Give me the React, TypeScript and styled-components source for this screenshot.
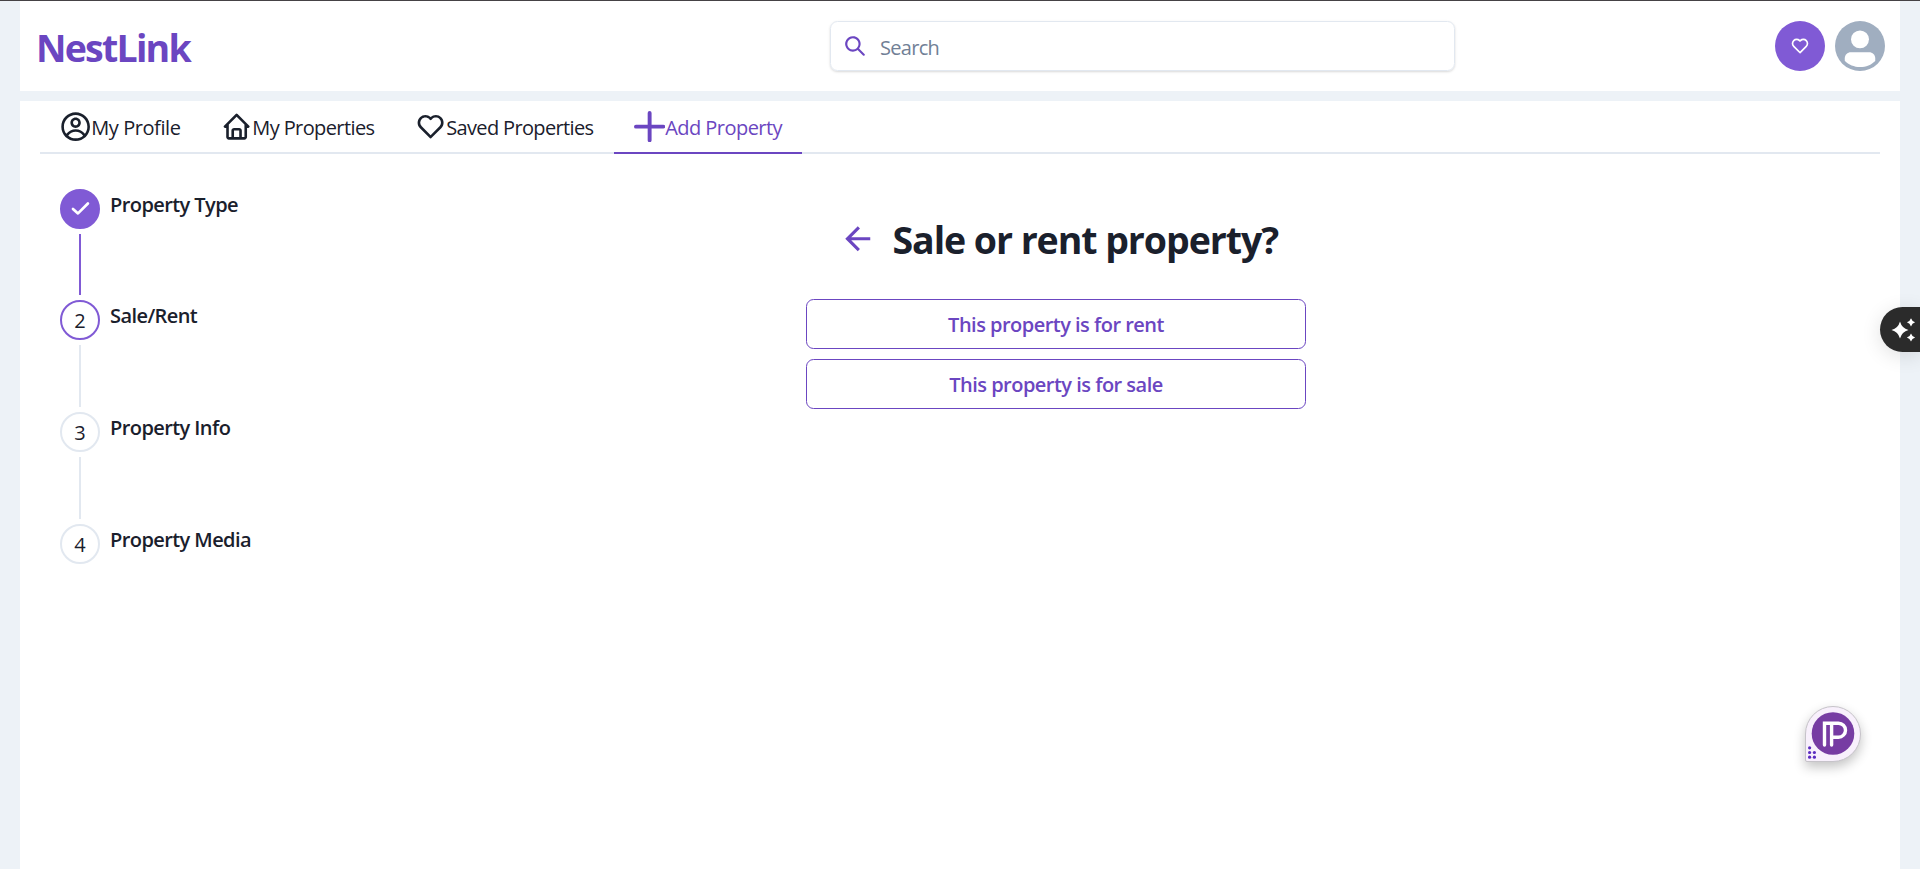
import React from "react";
import styled, { createGlobalStyle, css } from "styled-components";
import { BiHome, BiHeart } from "react-icons/bi";
import { CgProfile } from "react-icons/cg";
import { MdArrowBack } from "react-icons/md";

const color = {
  brand: "#6b46c1",
  brandLight: "#805ad5",
  ink: "#1a202c",
  line: "#e2e8f0",
  page: "#edf2f7",
  muted: "#718096",
};

const Global = createGlobalStyle`
  * { box-sizing: border-box; }
  html, body { margin: 0; overflow: hidden; }
  body {
    font-family: "Segoe UI", "Open Sans", "Noto Sans", sans-serif;
    font-size: 20px;
    line-height: 30px;
    color: ${color.ink};
    background: ${color.page};
  }
  svg { display: block; flex-shrink: 0; }
`;

const Text = styled.span<{ $track?: number }>`
  white-space: nowrap;
  letter-spacing: ${(p) => p.$track ?? 0}px;
`;

const Page = styled.div`
  height: 869px;
  padding: 0 20px;
  border-top: 1px solid #454245;
  display: flex;
  flex-direction: column;
  gap: 10px;
`;

const Header = styled.header`
  height: 90px;
  background: #fff;
  padding: 0 15px 0 16px;
  display: flex;
  align-items: center;
`;

const Brand = styled.h1`
  margin: 3px 0 0;
  width: 160px;
  font-size: 37.5px;
  line-height: 45px;
  font-weight: 700;
  color: ${color.brand};
`;

const SearchBox = styled.label`
  width: 625px;
  height: 50px;
  margin-left: 634px;
  display: flex;
  align-items: center;
  gap: 15px;
  padding-left: 14px;
  border: 1px solid ${color.line};
  border-radius: 7.5px;
  box-shadow: 0 1px 3px rgba(0, 0, 0, 0.1), 0 1px 2px rgba(0, 0, 0, 0.06);
  color: ${color.brand};
`;

const Placeholder = styled(Text)`
  color: ${color.muted};
  margin-top: 4px;
`;

const Actions = styled.div`
  display: flex;
  gap: 10px;
  margin-left: auto;
`;

const Round = styled.div<{ $bg: string }>`
  width: 50px;
  height: 50px;
  border-radius: 50%;
  background: ${(p) => p.$bg};
  color: #fff;
  display: flex;
  align-items: center;
  justify-content: center;
`;

const Panel = styled.main`
  flex: 1;
  background: #fff;
  padding: 0 20px;
`;

const Tabs = styled.nav`
  height: 53px;
  display: flex;
  border-bottom: 2px solid ${color.line};
`;

const Tab = styled.div<{ $width: number; $active?: boolean }>`
  width: ${(p) => p.$width}px;
  height: 53px;
  padding-left: 20px;
  display: flex;
  align-items: center;
  border-bottom: 2px solid transparent;
  ${(p) =>
    p.$active &&
    css`
      color: ${color.brand};
      border-bottom-color: ${color.brand};
    `}
  span { margin-top: 3px; }
`;

const Content = styled.div`
  display: flex;
  padding: 34.6px 20px 0;
`;

const Steps = styled.ol`
  list-style: none;
  margin: 0;
  padding: 0;
  width: 746px;
`;

const Step = styled.li`
  display: flex;
  gap: 10px;
  height: 111.67px;
`;

const Rail = styled.div`
  display: flex;
  flex-direction: column;
  align-items: center;
  gap: 5px;
`;

const Marker = styled.div<{ $state: "done" | "active" | "todo" }>`
  width: 40px;
  height: 40px;
  border-radius: 50%;
  display: flex;
  align-items: center;
  justify-content: center;
  padding-top: ${(p) => (p.$state === "done" ? 0 : 2)}px;
  border: 2px solid ${(p) => (p.$state === "todo" ? color.line : color.brandLight)};
  background: ${(p) => (p.$state === "done" ? color.brandLight : "#fff")};
`;

const Connector = styled.div<{ $done: boolean }>`
  width: 2px;
  height: 61.6px;
  background: ${(p) => (p.$done ? color.brandLight : color.line)};
`;

const StepTitle = styled.h3`
  margin: 1px 0 0;
  font-size: 20px;
  line-height: 30px;
  font-weight: 600;
`;

const Question = styled.section`
  width: 500px;
  padding-top: 27.4px;
`;

const QuestionHead = styled.div`
  display: flex;
  align-items: center;
  height: 45px;
  padding-left: 33px;
  gap: 16px;
  color: ${color.brand};
`;

const Title = styled.h2`
  margin: 3px 0 0;
  font-size: 37.5px;
  line-height: 45px;
  font-weight: 700;
  color: ${color.ink};
`;

const Choices = styled.div`
  margin-top: 38px;
  display: flex;
  flex-direction: column;
  gap: 10px;
`;

const Choice = styled.button`
  height: 50px;
  padding: 2px 0 0;
  border: 1px solid ${color.brand};
  border-radius: 7.5px;
  background: #fff;
  color: ${color.brand};
  font: 600 20px/24px "Segoe UI", "Open Sans", "Noto Sans", sans-serif;
`;

const AssistTab = styled.div`
  position: absolute;
  right: 0;
  top: 307px;
  width: 40px;
  height: 45px;
  padding-left: 11px;
  display: flex;
  align-items: center;
  border-radius: 23px 0 0 23px;
  background: #2b2b2b;
  box-shadow: 0 4px 20px rgba(0, 0, 0, 0.12);
`;

const ChatBadge = styled.div`
  position: absolute;
  left: 1805px;
  top: 706px;
  width: 56px;
  height: 56px;
  border: 1px solid #c6c3c9;
  border-radius: 28px 28px 28px 2px;
  background: #f8f0fc;
  box-shadow: 0 5px 12px rgba(0, 0, 0, 0.24);
`;

const SearchIcon = () => (
  <svg width="20" height="20" viewBox="0 0 24 24" fill="currentColor">
    <path d="M23.384,21.619,16.855,15.09a9.284,9.284,0,1,0-1.768,1.768l6.529,6.529a1.266,1.266,0,0,0,1.768,0A1.251,1.251,0,0,0,23.384,21.619ZM2.75,9.5a6.75,6.75,0,1,1,6.75,6.75A6.758,6.758,0,0,1,2.75,9.5Z" />
  </svg>
);

const PlusIcon = () => (
  <svg width="31.25" height="31.25" viewBox="0 0 16 16" fill="currentColor">
    <path d="M8 0a1 1 0 0 1 1 1v6h6a1 1 0 1 1 0 2H9v6a1 1 0 1 1-2 0V9H1a1 1 0 0 1 0-2h6V1a1 1 0 0 1 1-1z" />
  </svg>
);

const CheckIcon = () => (
  <svg width="20" height="20" viewBox="0 0 20 20" fill="none" stroke="#fff" strokeWidth="2.7" strokeLinecap="round" strokeLinejoin="round">
    <path d="M3 9.900l5 4.500L17.900 4.500" />
  </svg>
);

const AvatarIcon = () => (
  <svg width="50" height="50" viewBox="0 0 128 128" fill="#fff">
    <path d="M103,102.1388 C93.094,111.92 79.3504,118 64.1638,118 C48.8056,118 34.9294,111.768 25,101.7892 L25,95.2 C25,86.8096 31.981,80 40.6,80 L87.4,80 C96.019,80 103,86.8096 103,95.2 L103,102.1388 Z" />
    <circle cx="64" cy="47" r="23" />
  </svg>
);

const SparkleIcon = () => (
  <svg width="25" height="24" viewBox="0 0 25 24" fill="#fff">
    <path d="M9 3.500Q10.800 10.200 17.500 12Q10.800 13.800 9 20.500Q7.200 13.800.5 12Q7.200 10.200 9 3.500z" />
    <path d="M20 .2Q21 3.300 24.100 4.300Q21 5.300 20 8.400Q19 5.300 15.900 4.300Q19 3.300 20 .2z" />
    <path d="M20 15.400Q21 18.500 24.100 19.500Q21 20.500 20 23.600Q19 20.500 15.900 19.500Q19 18.500 20 15.400z" />
  </svg>
);

const ChatLogo = () => (
  <svg width="54" height="54" viewBox="0 0 54 54">
    <circle cx="27" cy="26.500" r="21.300" fill="#773ca3" />
    <path d="M18.500 38V16.200H32.500a6.900 6.900 0 0 1 0 14H25.600M25.600 38V17" fill="none" stroke="#fff" strokeWidth="3.400" strokeLinecap="round" />
    <g fill="#5a2bc0">
      <circle cx="3.600" cy="40.800" r="1.600" />
      <circle cx="3.600" cy="45.500" r="1.600" />
      <circle cx="8.400" cy="45.500" r="1.600" />
      <circle cx="3.600" cy="50.200" r="1.600" />
      <circle cx="8.400" cy="50.200" r="1.600" />
    </g>
  </svg>
);

const tabs = [
  { label: "My Profile", icon: <CgProfile size={31.25} />, width: 161, track: -0.43 },
  { label: "My Properties", icon: <BiHome size={31.25} />, width: 194, track: -0.6 },
  { label: "Saved Properties", icon: <BiHeart size={31.25} />, width: 219, track: -0.65 },
  { label: "Add Property", icon: <PlusIcon />, width: 188, track: -0.55, active: true },
];

const steps = [
  { title: "Property Type", state: "done" },
  { title: "Sale/Rent", state: "active" },
  { title: "Property Info", state: "todo" },
  { title: "Property Media", state: "todo" },
] as const;

export default function App() {
  return (
    <>
      <Global />
      <Page>
        <Header>
          <Brand><Text $track={-1.77}>NestLink</Text></Brand>
          <SearchBox>
            <SearchIcon />
            <Placeholder $track={-0.7}>Search</Placeholder>
          </SearchBox>
          <Actions>
            <Round $bg={color.brandLight}><BiHeart size={20} /></Round>
            <Round $bg="#a0aec0"><AvatarIcon /></Round>
          </Actions>
        </Header>
        <Panel>
          <Tabs>
            {tabs.map((t) => (
              <Tab key={t.label} $width={t.width} $active={t.active}>
                {t.icon}
                <Text $track={t.track}>{t.label}</Text>
              </Tab>
            ))}
          </Tabs>
          <Content>
            <Steps>
              {steps.map((s, i) => (
                <Step key={s.title}>
                  <Rail>
                    <Marker $state={s.state}>{s.state === "done" ? <CheckIcon /> : i + 1}</Marker>
                    {i < steps.length - 1 && <Connector $done={s.state === "done"} />}
                  </Rail>
                  <StepTitle><Text $track={-0.58}>{s.title}</Text></StepTitle>
                </Step>
              ))}
            </Steps>
            <Question>
              <QuestionHead>
                <MdArrowBack size={37.5} />
                <Title><Text $track={-1.06}>Sale or rent property?</Text></Title>
              </QuestionHead>
              <Choices>
                <Choice><Text $track={-0.52}>This property is for rent</Text></Choice>
                <Choice><Text $track={-0.52}>This property is for sale</Text></Choice>
              </Choices>
            </Question>
          </Content>
        </Panel>
      </Page>
      <AssistTab><SparkleIcon /></AssistTab>
      <ChatBadge><ChatLogo /></ChatBadge>
    </>
  );
}
